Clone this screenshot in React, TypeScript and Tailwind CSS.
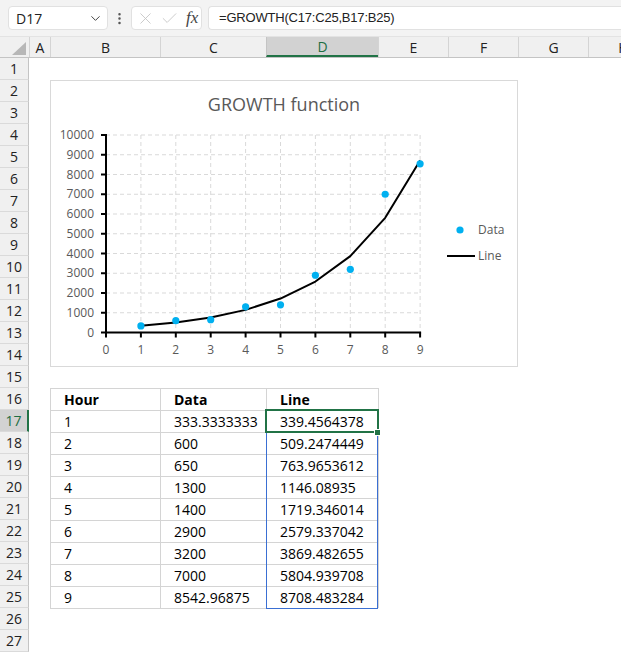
import { ChevronDown, EllipsisVertical, X, Check } from 'lucide-react';

const COLS = [
  { key: 'A', w: 'w-[21px]' },
  { key: 'B', w: 'w-[110px]' },
  { key: 'C', w: 'w-[106px]' },
  { key: 'D', w: 'w-[112px]' },
  { key: 'E', w: 'w-[70px]' },
  { key: 'F', w: 'w-[70px]' },
  { key: 'G', w: 'w-[70px]' },
  { key: 'H', w: 'w-[70px]' },
];

const table: Record<number, string[]> = {
  16: ['Hour', 'Data', 'Line'],
  17: ['1', '333.3333333', '339.4564378'],
  18: ['2', '600', '509.2474449'],
  19: ['3', '650', '763.9653612'],
  20: ['4', '1300', '1146.08935'],
  21: ['5', '1400', '1719.346014'],
  22: ['6', '2900', '2579.337042'],
  23: ['7', '3200', '3869.482655'],
  24: ['8', '7000', '5804.939708'],
  25: ['9', '8542.96875', '8708.483284'],
};

const dataPts = [333.3333, 600, 650, 1300, 1400, 2900, 3200, 7000, 8542.96875];
const linePts = [339.456, 509.247, 763.965, 1146.089, 1719.346, 2579.337, 3869.483, 5804.94, 8708.483];

const X0 = 55;
const DX = 34.9;
const xi = (i: number) => X0 + i * DX;
const yv = (v: number) => 251.5 - v * 0.01975;

function Chart() {
  const yTicks = [0, 1000, 2000, 3000, 4000, 5000, 6000, 7000, 8000, 9000, 10000];
  const xTicks = [0, 1, 2, 3, 4, 5, 6, 7, 8, 9];
  return (
    <div className="absolute left-[21px] top-[22px] w-[468px] h-[287px] bg-white border border-[#d9d9d9]">
      <svg width="466" height="285" className="block" style={{ fontFamily: '"Open Sans", sans-serif' }}>
        <text x="233" y="30" textAnchor="middle" fontSize="18" fill="#595959">
          GROWTH function
        </text>
        {yTicks.slice(1).map((v) => (
          <line key={'h' + v} x1={X0} x2={xi(9)} y1={yv(v)} y2={yv(v)} stroke="#d9d9d9" strokeDasharray="4 3" />
        ))}
        {xTicks.slice(1).map((i) => (
          <line key={'v' + i} x1={xi(i)} x2={xi(i)} y1={yv(10000)} y2={yv(0)} stroke="#d9d9d9" strokeDasharray="4 3" />
        ))}
        <line x1={X0} x2={X0} y1={yv(10000) - 1} y2={yv(0)} stroke="#000" strokeWidth="2" />
        <line x1={X0 - 1} x2={xi(9) + 1} y1={yv(0)} y2={yv(0)} stroke="#000" strokeWidth="2" />
        {yTicks.map((v) => (
          <g key={'yt' + v}>
            <line x1={X0 - 5} x2={X0} y1={yv(v)} y2={yv(v)} stroke="#000" strokeWidth="2" />
            <text x="43" y={yv(v) + 4} textAnchor="end" fontSize="12" fill="#595959">
              {v}
            </text>
          </g>
        ))}
        {xTicks.map((i) => (
          <g key={'xt' + i}>
            <line x1={xi(i)} x2={xi(i)} y1={yv(0)} y2={yv(0) + 5} stroke="#000" strokeWidth="2" />
            <text x={xi(i)} y="273" textAnchor="middle" fontSize="12" fill="#595959">
              {i}
            </text>
          </g>
        ))}
        <polyline
          points={linePts.map((v, i) => `${xi(i + 1)},${yv(v)}`).join(' ')}
          fill="none"
          stroke="#000"
          strokeWidth="2"
          strokeLinejoin="round"
        />
        {dataPts.map((v, i) => (
          <circle key={'d' + i} cx={xi(i + 1)} cy={yv(v)} r="3.6" fill="#00b0f0" />
        ))}
        <circle cx="409" cy="149" r="3.6" fill="#00b0f0" />
        <text x="427" y="153" fontSize="12" fill="#595959">Data</text>
        <line x1="396" x2="424" y1="175" y2="175" stroke="#000" strokeWidth="2" />
        <text x="427" y="179" fontSize="12" fill="#595959">Line</text>
      </svg>
    </div>
  );
}

function Row({ n }: { n: number }) {
  const active = n === 17;
  const vals = table[n];
  const inTable = n >= 16 && n <= 25;
  const closing = n === 26;
  return (
    <div className="flex h-[22px]">
      <div
        className={
          'w-[29px] shrink-0 flex items-center justify-center border-b border-b-[#dadada] text-[14px] ' +
          (active
            ? 'bg-[#d2d2d2] text-[#1e6e42] border-r-2 border-r-[#217346]'
            : 'bg-[#f0f0f0] text-[#222] border-r border-r-[#c4c4c4]')
        }
      >
        {n}
      </div>
      {COLS.map((c, ci) => {
        const tableCol = ci >= 1 && ci <= 3;
        let cls = c.w + ' shrink-0 h-full flex items-center pl-[13px] text-[14px] text-black whitespace-nowrap';
        if (inTable && tableCol) cls += ' border-t border-l border-[#d4d4d4]';
        if (closing && tableCol) cls += ' border-t border-[#d4d4d4]';
        if (inTable && ci === 4) cls += ' border-l border-[#d4d4d4]';
        if (n === 16) cls += ' font-bold';
        return (
          <div key={c.key} className={cls}>
            {inTable && tableCol ? vals[ci - 1] : null}
          </div>
        );
      })}
    </div>
  );
}

export default function App() {
  const rows = Array.from({ length: 27 }, (_, i) => i + 1);
  return (
    <div className="w-[621px] h-[654px] overflow-hidden bg-white" style={{ fontFamily: '"Open Sans", sans-serif' }}>
      <div className="flex h-[37px] items-center bg-[#f3f3f3] border-b border-[#e3e3e3]">
        <div className="ml-[8px] w-[100px] h-[24px] bg-white rounded-[4px] border border-[#e1e1e1] flex items-center justify-between pl-[7px] pr-[4px] text-[14px] text-[#222]">
          <span>D17</span>
          <ChevronDown size={15} strokeWidth={1.6} className="text-[#444]" />
        </div>
        <div className="w-[23px] flex justify-center text-[#555]">
          <EllipsisVertical size={15} strokeWidth={2} />
        </div>
        <div className="w-[71px] h-[24px] bg-white rounded-[4px] border border-[#e1e1e1] flex items-center pl-[4px] gap-[5px]">
          <X size={19} strokeWidth={1.1} className="text-[#c4c4c4]" />
          <Check size={19} strokeWidth={1.1} className="text-[#c4c4c4]" />
          <span className="ml-[2px] italic text-[17px] text-[#444]" style={{ fontFamily: '"Liberation Serif", serif' }}>
            fx
          </span>
        </div>
        <div className="ml-[6px] flex-1 h-[24px] bg-white rounded-l-[4px] border border-r-0 border-[#e1e1e1] flex items-center pl-[10px] text-[13px] tracking-[-0.2px] text-[#222]" style={{ fontFamily: '"Liberation Sans", sans-serif' }}>
          =GROWTH(C17:C25,B17:B25)
        </div>
      </div>

      <div className="flex h-[21px] bg-[#f0f0f0] border-b border-[#c4c4c4]">
        <div className="w-[29px] shrink-0 relative">
          <svg width="29" height="20" className="absolute inset-0">
            <polygon points="12,18 26,18 26,5" fill="#b7b7b7" />
          </svg>
        </div>
        {COLS.map((c) =>
          c.key === 'D' ? (
            <div
              key={c.key}
              className={c.w + ' shrink-0 flex items-center justify-center bg-[#d2d2d2] border-l border-[#c4c4c4] border-b-2 border-b-[#217346] text-[14px] text-[#1e6e42]'}
            >
              {c.key}
            </div>
          ) : (
            <div key={c.key} className={c.w + ' shrink-0 flex items-center justify-center border-l border-[#d4d4d4] text-[14px] text-[#222]'}>
              {c.key}
            </div>
          )
        )}
      </div>

      <div className="relative">
        {rows.map((n) => (
          <Row key={n} n={n} />
        ))}
        <div className="absolute left-[29px] top-0 w-[600px] h-[600px] pointer-events-none">
          <Chart />
          <div className="absolute left-[237px] top-[352px] w-[112px] h-[199px] border border-[#3a6fd3]" />
          <div className="absolute left-[236px] top-[351px] w-[114px] h-[24px] border-2 border-[#217346]" />
          <div className="absolute left-[345px] top-[371px] w-[7px] h-[7px] bg-[#217346] border border-white" />
        </div>
      </div>
    </div>
  );
}
